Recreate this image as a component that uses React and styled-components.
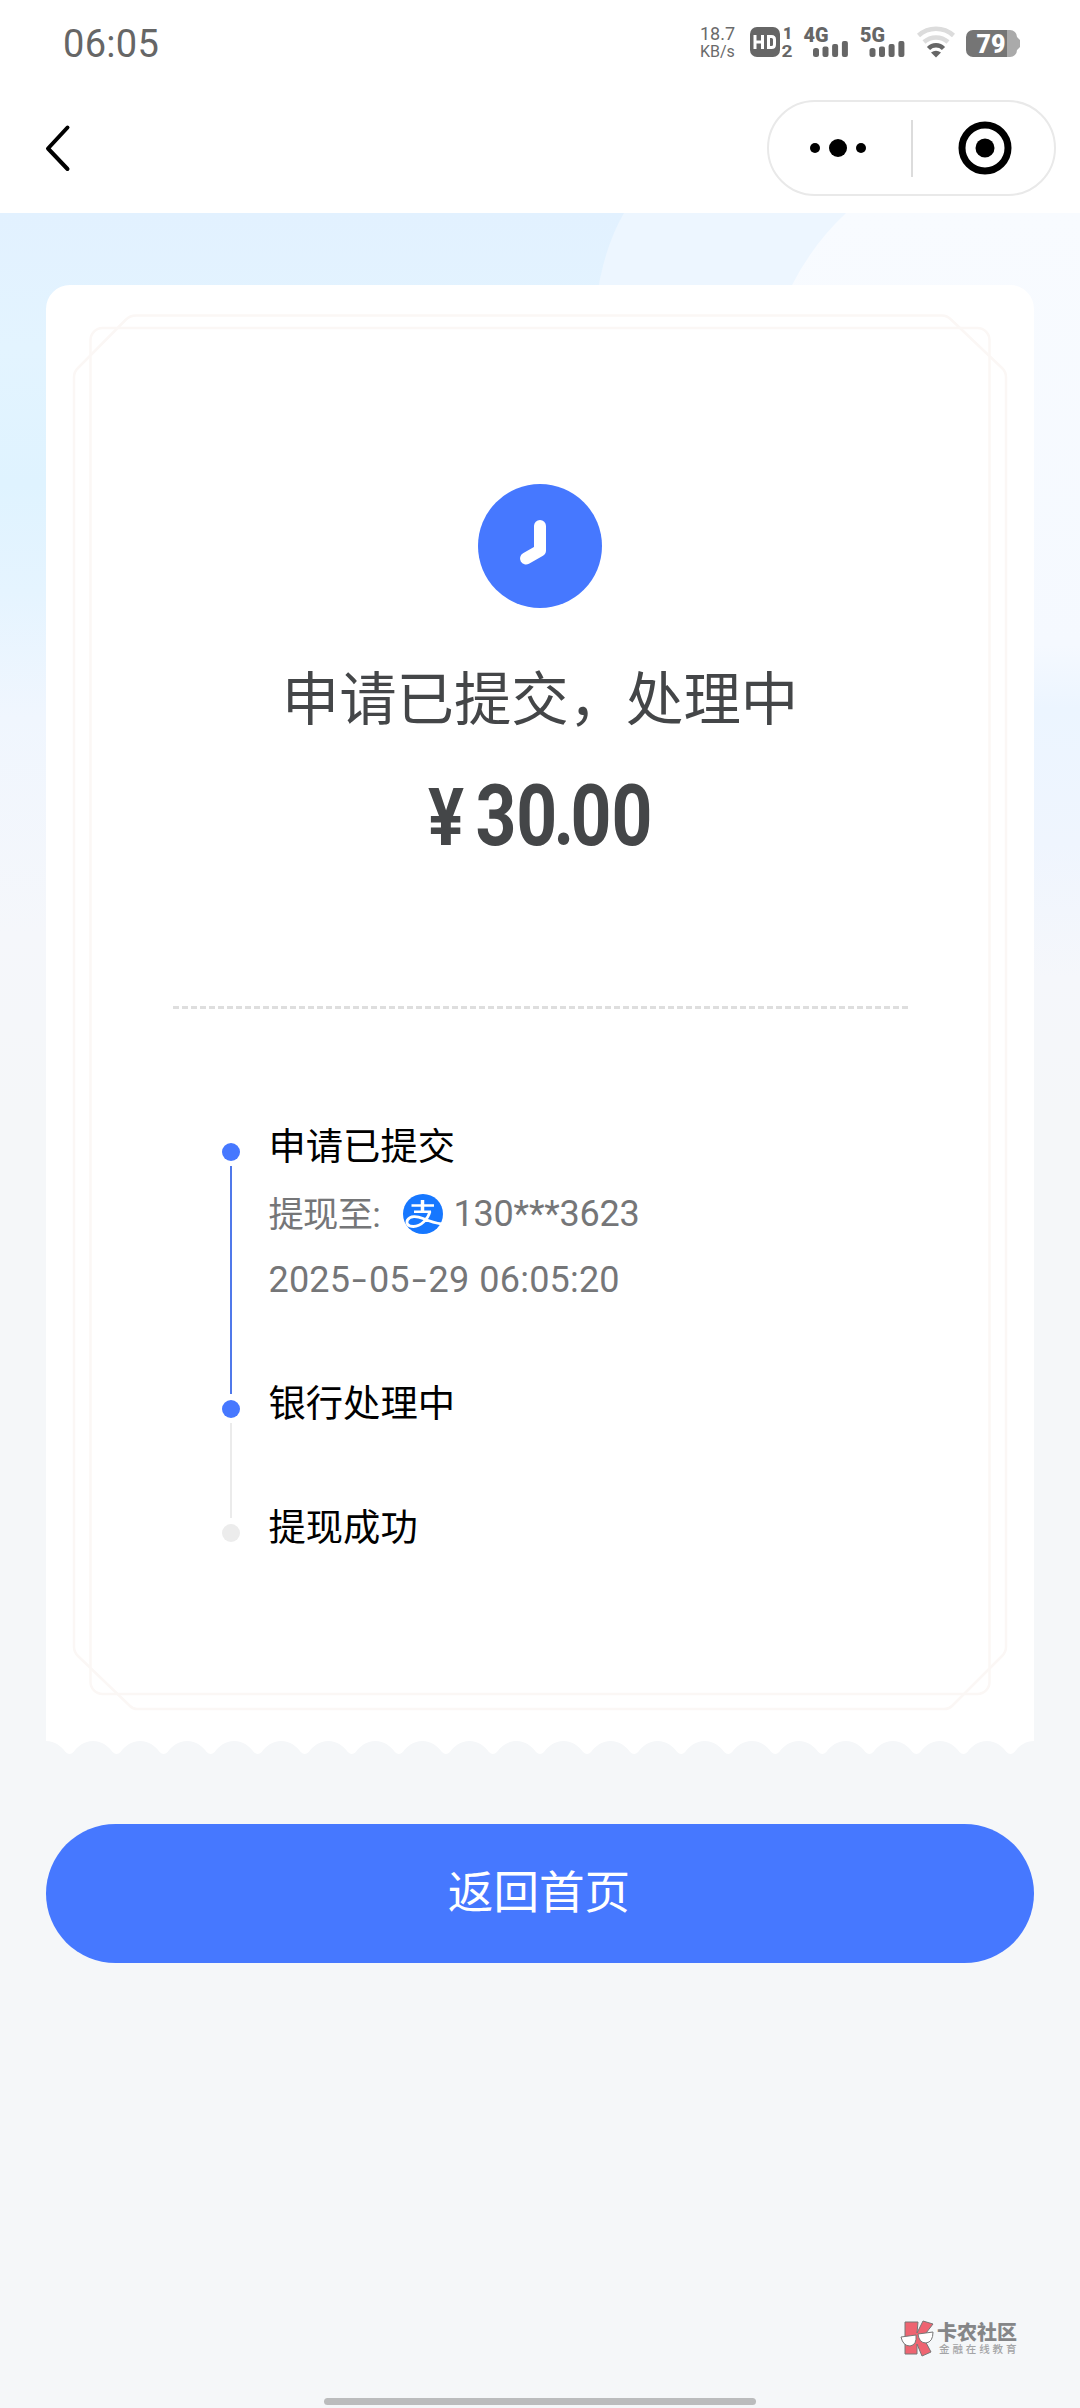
import React from "react"
import styled, { createGlobalStyle } from "styled-components"

const GlobalStyle = createGlobalStyle`
    * { box-sizing: border-box; }
    body {
        margin: 0;
        background-color: #f5f7f9;
        font-family: Roboto, "Noto Sans CJK SC", sans-serif;
    }
`

const Page = styled.div`
    position: relative;
    display: flex;
    flex-direction: column;
    width: 1080px;
    height: 2408px;
    overflow: hidden;
    background-color: #f5f7f9;
`
const StatusBar = styled.div`
    display: flex;
    justify-content: space-between;
    height: 86px;
    padding: 0 60px 0 63px;
    background-color: #fff;
`
const Time = styled.div`
    font-size: 38px;
    line-height: 44px;
    letter-spacing: 0.3px;
    padding-top: 22px;
    color: #666;
`
const StatusIcons = styled.div`
    display: flex;
    padding-top: 24px;
`
const Speed = styled.div`
    display: flex;
    flex-direction: column;
    width: 49px;
    padding-left: 1px;
    color: #6a6a6a;
    font-size: 18px;
    line-height: 20px;
`
const SpeedUnit = styled.span`
    font-size: 16px;
    line-height: 15px;
`
const NavBar = styled.div`
    display: flex;
    align-items: center;
    justify-content: space-between;
    height: 127px;
    padding: 0 24px 3px 44px;
    background-color: #fff;
`
const Capsule = styled.div`
    display: flex;
    align-items: center;
    width: 289px;
    height: 96px;
    border: 2px solid #e9e9e9;
    border-radius: 48px;
`
const CapsuleHalf = styled.div`
    display: flex;
    flex: 1;
    align-items: center;
    justify-content: center;
    padding: ${({$pad}) => $pad || 0};
`
const CapsuleDivider = styled.div`
    width: 2px;
    height: 57px;
    background-color: #dcdcdc;
`
const Content = styled.main`
    position: relative;
    display: flex;
    flex-direction: column;
    flex: 1;
    padding: 72px 46px 0;
`
const Sky = styled.svg`
    position: absolute;
    left: 0;
    top: 0;
`
const Ticket = styled.section`
    position: relative;
    display: flex;
    flex-direction: column;
    align-items: center;
    height: 1470px;
    padding-top: 199px;
`
const TicketShape = styled.svg`
    position: absolute;
    left: 0;
    top: 0;
`
const ClockBadge = styled.svg`
    position: relative;
    flex: none;
`
const Title = styled.h1`
    position: relative;
    margin: 44px 0 0;
    font-size: 57.4px;
    font-weight: 400;
    line-height: 86px;
    color: #444648;
    font-family: "Noto Sans CJK SC", sans-serif;
`
const Amount = styled.div`
    position: relative;
    display: flex;
    align-items: baseline;
    margin-top: 28px;
    font-size: 85px;
    font-weight: 700;
    line-height: 100px;
    color: #444648;
    transform: scaleX(0.84);
`
const Currency = styled.span`
    display: flex;
    justify-content: center;
    width: 42px;
    margin-right: 14px;
    font-size: 80px;
    line-height: 90px;
`
const Point = styled.span`
    margin: 0 -4.5px;
`
const Divider = styled.div`
    position: relative;
    width: 735px;
    margin-top: 140px;
    border-top: 3px dashed #dedede;
`
const Steps = styled.div`
    position: relative;
    display: flex;
    flex-direction: column;
    width: 637px;
    margin-top: 107px;
`
const Step = styled.div`
    display: flex;
    height: ${({$height}) => $height}px;
`
const Rail = styled.div`
    display: flex;
    flex-direction: column;
    align-items: center;
    width: 18px;
    margin: 27px 29px 0 0;
    flex: none;
`
const Dot = styled.div`
    flex: none;
    width: 18px;
    height: 18px;
    border-radius: 50%;
    background-color: ${({$done}) => ($done ? "#4678ff" : "#ececec")};
`
const Line = styled.div`
    flex: none;
    width: 2px;
    height: ${({$height}) => $height}px;
    margin: 5px 0 0 1px;
    background-color: ${({$done}) => ($done ? "#5079ea" : "#ebebeb")};
`
const StepBody = styled.div`
    display: flex;
    flex-direction: column;
    white-space: nowrap;
`
const StepTitle = styled.div`
    margin-bottom: 9px;
    font-size: 37.3px;
    line-height: 56px;
    color: #000;
    font-family: "Noto Sans CJK SC", sans-serif;
`
const StepInfo = styled.div`
    display: flex;
    align-items: center;
    height: 66px;
    font-size: 36px;
    letter-spacing: ${({$spacing}) => $spacing || 0}px;
    color: #757678;
`
const InfoLabel = styled.span`
    width: 134px;
    margin-bottom: 6px;
    font-size: 35.3px;
    letter-spacing: -0.7px;
`
const Account = styled.span`
    margin-left: 11px;
`
const Dash = styled.span`
    width: 18.7px;
    text-align: center;
    transform: scaleX(1.45);
`
const Clock = styled.span`
    margin-left: 10px;
`
const HomeButton = styled.button`
    position: relative;
    height: 139px;
    margin-top: 69px;
    padding: 0 2px 9px 0;
    border: 0;
    border-radius: 70px;
    background-color: #4678ff;
    color: #fff;
    font-size: 45.6px;
    font-family: "Noto Sans CJK SC", sans-serif;
`
const Watermark = styled.div`
    position: absolute;
    left: 900px;
    top: 2320px;
    display: flex;
    gap: 2px;
    white-space: nowrap;
`
const Brand = styled.div`
    display: flex;
    flex-direction: column;
    padding-top: 2px;
`
const BrandName = styled.span`
    font-size: 20px;
    font-weight: 900;
    line-height: 22px;
    color: #858688;
`
const BrandSlogan = styled.span`
    padding-left: 2px;
    font-size: 10.5px;
    font-weight: 500;
    letter-spacing: 2.9px;
    line-height: 12px;
    color: #a3a4a6;
`
const HomeIndicator = styled.div`
    position: absolute;
    left: 324px;
    bottom: 3px;
    width: 432px;
    height: 7px;
    border-radius: 4px;
    background-color: #bbbcbd;
`
const SvgLabel = styled.text`
    font-family: Roboto, sans-serif;
    font-weight: ${({$weight}) => $weight || 700};
    font-size: ${({$size}) => $size}px;
    fill: ${({$fill}) => $fill || "#666"};
`

const SCALLOPS = 21
const CARD_W = 988

// white ticket: rounded top, scalloped bottom edge
function ticketPath() {
    const step = CARD_W / SCALLOPS
    let d = `M0 24 A24 24 0 0 1 24 0 H${CARD_W - 24} A24 24 0 0 1 ${CARD_W} 24 V1456`
    for (let i = SCALLOPS; i > 0; i--) {
        const x = i * step
        const mid = x - step / 2
        d += ` C${x - 9} 1456 ${x - 15} 1461 ${mid + 4} 1467`
        d += ` Q${mid} 1471 ${mid - 4} 1467`
        d += ` C${x - step + 15} 1461 ${x - step + 9} 1456 ${x - step} 1456`
    }
    return d + " Z"
}

function StatusGlyphs() {
    return (
        <svg width="272" height="40" viewBox="748 24 272 40">
            <rect x="750" y="27" width="30" height="30" rx="7" fill="#666" />
            <path d="M755 35v14M762.5 35v14M755 42h8M768.500 36.500h3q3 0 3 3v5q0 3-3 3h-3z" fill="none" stroke="#fff" strokeWidth="3" />
            <SvgLabel x="783" y="38.500" $size={16} $weight={900}>1</SvgLabel>
            <SvgLabel x="781.500" y="56.500" $size={16} textLength="11" lengthAdjust="spacingAndGlyphs">2</SvgLabel>
            {[["4G", 803.5], ["5G", 860]].map(([name, x]) => (
                <g key={name} fill="#666">
                    <SvgLabel x={x} y="41.500" $size={19.5} $weight={900} textLength="25" lengthAdjust="spacingAndGlyphs">{name}</SvgLabel>
                    <rect x={x + 9.5} y="48" width="6" height="9" rx="2.500" />
                    <rect x={x + 19} y="46.500" width="6" height="10.500" rx="2" />
                    <rect x={x + 28.600} y="44" width="6" height="13" rx="2" />
                    <rect x={x + 38.4} y="41" width="6" height="16" rx="2" />
                </g>
            ))}
            <g fill="none" strokeWidth="4.500">
                <path d="M918.500 35.500A26 26 0 0 1 953.500 35.500" stroke="#dcdcdc" />
                <path d="M924 42A18 18 0 0 1 948 42" stroke="#dcdcdc" />
                <path d="M928.500 48.500A10.500 10.500 0 0 1 943.500 48.500" stroke="#666" />
            </g>
            <path d="M931 52.500Q936 49 941 52.500L936 57.500Z" fill="#666" />
            <path d="M1007 30h3a7 7 0 0 1 7 7l3 3v7l-3 3a7 7 0 0 1-7 7h-3z" fill="#aaa" />
            <path d="M973 30h34v27h-34a7 7 0 0 1-7-7v-13a7 7 0 0 1 7-7z" fill="#757575" />
            <SvgLabel x="976.5" y="52.500" $size={25} $weight={900} $fill="#fff">79</SvgLabel>
        </svg>
    )
}

function AlipayIcon() {
    return (
        <svg width="40" height="40" viewBox="0 0 40 40">
            <circle cx="20" cy="20" r="20" fill="#1677ff" />
            <g fill="none" stroke="#fff">
                <path d="M8.500 11.500H31M11 17.800H28" strokeWidth="2.500" />
                <path d="M19.500 6V18" strokeWidth="3.500" />
                <path d="M27 17.500C25 25 18 32.500 10.500 32.500C4.500 32.500 3 29 4.500 26C7 21.500 14 22 20 24.500C26 27 31 29 39 30" strokeWidth="2.800" />
            </g>
        </svg>
    )
}

export default function App() {
    return (
        <Page>
            <GlobalStyle />
            <StatusBar>
                <Time>06:05</Time>
                <StatusIcons>
                    <Speed>
                        18.7
                        <SpeedUnit>KB/s</SpeedUnit>
                    </Speed>
                    <StatusGlyphs />
                </StatusIcons>
            </StatusBar>
            <NavBar>
                <svg width="30" height="50" viewBox="0 0 30 50" fill="none">
                    <path d="M23.500 4.500L4 25.500L23.500 46" stroke="#000" strokeWidth="4" strokeLinecap="round" strokeLinejoin="round" />
                </svg>
                <Capsule>
                    <CapsuleHalf $pad="0 4px 0 0">
                        <svg width="58" height="20" viewBox="0 0 58 20">
                            <circle cx="6" cy="10" r="5" />
                            <circle cx="29" cy="10" r="9" />
                            <circle cx="52" cy="10" r="5" />
                        </svg>
                    </CapsuleHalf>
                    <CapsuleDivider />
                    <CapsuleHalf $pad="0 0 0 4px">
                        <svg width="54" height="54" viewBox="0 0 54 54">
                            <circle cx="27" cy="27" r="23" fill="none" stroke="#000" strokeWidth="7" />
                            <circle cx="27" cy="27" r="9.500" />
                        </svg>
                    </CapsuleHalf>
                </Capsule>
            </NavBar>
            <Content>
                <Sky width="1080" height="900" viewBox="0 0 1080 900">
                    <defs>
                        <linearGradient id="skyLeft" x1="0" x2="0" y1="0" y2="1">
                            <stop offset="0" stopColor="#e2f1ff" />
                            <stop offset="0.15" stopColor="#e3f4ff" />
                            <stop offset="0.3" stopColor="#dff3ff" />
                            <stop offset="0.42" stopColor="#e5f4ff" />
                            <stop offset="0.56" stopColor="#f0f6fe" />
                            <stop offset="0.8" stopColor="#f5f7fb" />
                            <stop offset="1" stopColor="#f5f7f9" />
                        </linearGradient>
                        <linearGradient id="skyRight" x1="0" x2="0" y1="0" y2="1">
                            <stop offset="0" stopColor="#f8fbff" />
                            <stop offset="0.48" stopColor="#f5f9ff" />
                            <stop offset="0.55" stopColor="#ecf5ff" />
                            <stop offset="0.7" stopColor="#eff5fe" />
                            <stop offset="0.85" stopColor="#f5f7fb" />
                            <stop offset="1" stopColor="#f5f7f9" />
                        </linearGradient>
                    </defs>
                    <rect width="1080" height="900" fill="url(#skyLeft)" />
                    <path d="M624 0Q603 36 596 90H860V0Z" fill="#edf6ff" />
                    <path d="M846 0Q812 32 791 74V900H1080V0Z" fill="url(#skyRight)" />
                </Sky>
                <Ticket>
                    <TicketShape width="988" height="1472" viewBox="0 0 988 1472">
                        <path d={ticketPath()} fill="#fff" />
                        <g fill="none" stroke="#fbf7f5" strokeWidth="2.500">
                            <path d="M90 30.500H896Q901 30.500 905 34.500L956 83Q960 87 960 92V1362Q960 1367 956 1371L906 1421Q903 1424 898 1424H91Q87 1424 84 1421L32 1371Q28 1367 28 1362V92Q28 87 32 83L80 34.500Q84 30.500 90 30.500Z" />
                            <rect x="44.500" y="43" width="899" height="1366" rx="12" />
                        </g>
                    </TicketShape>
                    <ClockBadge width="124" height="124" viewBox="0 0 124 124">
                        <circle cx="62" cy="62" r="62" fill="#4678ff" />
                        <path d="M62 42V66.500L48 74.500" fill="none" stroke="#fff" strokeWidth="12" strokeLinecap="round" strokeLinejoin="round" />
                    </ClockBadge>
                    <Title>申请已提交，处理中</Title>
                    <Amount>
                        <Currency>¥</Currency>
                        30<Point>.</Point>00
                    </Amount>
                    <Divider />
                    <Steps>
                        <Step $height={257}>
                            <Rail>
                                <Dot $done />
                                <Line $done $height={228} />
                            </Rail>
                            <StepBody>
                                <StepTitle>申请已提交</StepTitle>
                                <StepInfo $spacing={-0.2}>
                                    <InfoLabel>提现至:</InfoLabel>
                                    <AlipayIcon />
                                    <Account>130***3623</Account>
                                </StepInfo>
                                <StepInfo $spacing={0.2}>
                                    2025<Dash>-</Dash>05<Dash>-</Dash>29
                                    <Clock>06:05:20</Clock>
                                </StepInfo>
                            </StepBody>
                        </Step>
                        <Step $height={124}>
                            <Rail>
                                <Dot $done />
                                <Line $height={95} />
                            </Rail>
                            <StepTitle>银行处理中</StepTitle>
                        </Step>
                        <Step $height={56}>
                            <Rail>
                                <Dot />
                            </Rail>
                            <StepTitle>提现成功</StepTitle>
                        </Step>
                    </Steps>
                </Ticket>
                <HomeButton>返回首页</HomeButton>
            </Content>
            <Watermark>
                <svg width="35" height="38" viewBox="0 0 35 38">
                    <g fill="#ee6471" stroke="#777" strokeWidth="1">
                        <path d="M5 2L18 2L17 13L23 1L33 4L23 17L31 32L22 36L17 24L17 34L5 34Z" />
                    </g>
                    <g fill="#fff" stroke="#777" strokeWidth="1">
                        <path d="M1 17L16 15Q17 25 10 26Q3 26 1 17Z" />
                        <path d="M18 14L33 12Q33 22 26 23Q19 23 18 14Z" />
                    </g>
                </svg>
                <Brand>
                    <BrandName>卡农社区</BrandName>
                    <BrandSlogan>金融在线教育</BrandSlogan>
                </Brand>
            </Watermark>
            <HomeIndicator />
        </Page>
    )
}
